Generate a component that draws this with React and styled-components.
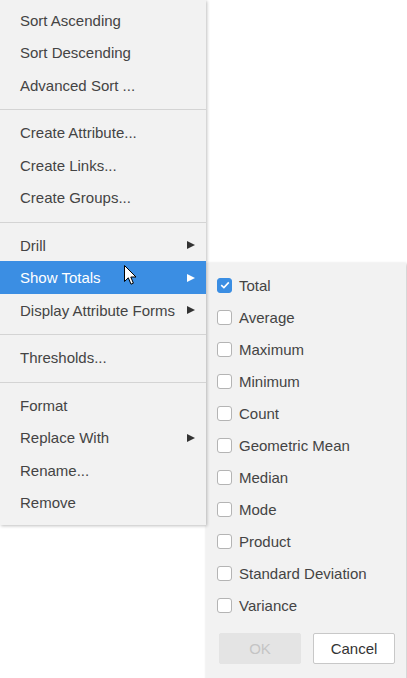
import React from 'react';
import styled, { createGlobalStyle } from 'styled-components';

const mainItems = [
  [
    { label: 'Sort Ascending' },
    { label: 'Sort Descending' },
    { label: 'Advanced Sort ...' },
  ],
  [
    { label: 'Create Attribute...' },
    { label: 'Create Links...' },
    { label: 'Create Groups...' },
  ],
  [
    { label: 'Drill', sub: true },
    { label: 'Show Totals', sub: true, active: true },
    { label: 'Display Attribute Forms', sub: true },
  ],
  [{ label: 'Thresholds...' }],
  [
    { label: 'Format' },
    { label: 'Replace With', sub: true },
    { label: 'Rename...' },
    { label: 'Remove' },
  ],
];

const totals = [
  { label: 'Total', checked: true },
  { label: 'Average' },
  { label: 'Maximum' },
  { label: 'Minimum' },
  { label: 'Count' },
  { label: 'Geometric Mean' },
  { label: 'Median' },
  { label: 'Mode' },
  { label: 'Product' },
  { label: 'Standard Deviation' },
  { label: 'Variance' },
];

export default function App() {
  return (
    <>
      <GlobalStyle />
      <Page>
        <Menu>
          {mainItems.map((group, gi) => (
            <React.Fragment key={gi}>
              {gi > 0 && <Separator />}
              {group.map((item) => (
                <MenuItem key={item.label} $active={item.active}>
                  <span>{item.label}</span>
                  {item.sub && <Arrow $active={item.active} />}
                  {item.active && <Cursor />}
                </MenuItem>
              ))}
            </React.Fragment>
          ))}
        </Menu>
        <TotalsPanel />
      </Page>
    </>
  );
}

function TotalsPanel() {
  return (
    <SubMenu>
      {totals.map((t) => (
        <CheckRow key={t.label}>
          <CheckBox $checked={t.checked}>
            {t.checked && (
              <svg width="10" height="8" viewBox="0 0 10 8">
                <path
                  d="M1.2 4.2 L3.9 6.6 L8.8 1.4"
                  fill="none"
                  stroke="#fff"
                  strokeWidth="1.6"
                />
              </svg>
            )}
          </CheckBox>
          <span>{t.label}</span>
        </CheckRow>
      ))}
      <Actions>
        <Button disabled>OK</Button>
        <Button>Cancel</Button>
      </Actions>
    </SubMenu>
  );
}

function Cursor() {
  return (
    <CursorIcon width="14" height="21" viewBox="0 0 14 21">
      <path
        d="M0.5 0.5 L0.5 16.5 L4.3 12.8 L7 19.2 L9.4 18.2 L6.8 12 L12 12 Z"
        fill="#fff"
        stroke="#000"
        strokeWidth="1"
        strokeLinejoin="round"
      />
    </CursorIcon>
  );
}

const GlobalStyle = createGlobalStyle`
  body {
    margin: 0;
    background: #fff;
    font-family: "Liberation Sans", Arial, sans-serif;
  }
`;

const Page = styled.div`
  display: flex;
  align-items: flex-start;
  height: 678px;
  overflow: hidden;
  font-size: 15px;
  color: #444;
`;

const Menu = styled.div`
  position: relative;
  z-index: 2;
  width: 206px;
  flex-shrink: 0;
  box-sizing: border-box;
  padding: 3.75px 0 6px;
  background: #f2f2f2;
  box-shadow: 1px 1px 3px rgba(0, 0, 0, 0.25);
`;

const Separator = styled.div`
  height: 1px;
  margin: 8px 0 6px;
  background: #d4d4d4;
`;

const MenuItem = styled.div`
  position: relative;
  height: 32.5px;
  display: flex;
  align-items: center;
  justify-content: space-between;
  padding: 0 11px 0 20px;
  background: ${(p) => (p.$active ? '#3b8ee3' : 'transparent')};
  color: ${(p) => (p.$active ? '#fff' : 'inherit')};
  white-space: nowrap;
`;

const Arrow = styled.i`
  width: 0;
  height: 0;
  border-top: 4.5px solid transparent;
  border-bottom: 4.5px solid transparent;
  border-left: 8px solid ${(p) => (p.$active ? '#fff' : '#333')};
`;

const CursorIcon = styled.svg`
  position: absolute;
  left: 124px;
  top: 4px;
`;

const SubMenu = styled.div`
  width: 200px;
  flex-shrink: 0;
  margin-top: 263px;
  box-sizing: border-box;
  padding: 6px 0 20px;
  background: #f2f2f2;
  box-shadow: 1px 1px 3px rgba(0, 0, 0, 0.25);
`;

const CheckRow = styled.div`
  height: 32px;
  display: flex;
  align-items: center;
  gap: 7px;
  padding-left: 11px;
`;

const CheckBox = styled.span`
  width: 15px;
  height: 15px;
  box-sizing: border-box;
  display: flex;
  align-items: center;
  justify-content: center;
  border-radius: 3px;
  border: 1px solid ${(p) => (p.$checked ? '#3b8ee3' : '#b4b4b4')};
  background: ${(p) => (p.$checked ? '#3b8ee3' : '#fff')};
`;

const Actions = styled.div`
  display: flex;
  gap: 12px;
  padding: 12px 0 0 13px;
`;

const Button = styled.button`
  width: 82px;
  height: 31px;
  box-sizing: border-box;
  border-radius: 2px;
  font: 15px "Liberation Sans", Arial, sans-serif;
  border: 1px solid ${(p) => (p.disabled ? '#e4e4e4' : '#c8c8c8')};
  background: ${(p) => (p.disabled ? '#e4e4e4' : '#fff')};
  color: ${(p) => (p.disabled ? '#c4c4c4' : '#333')};
`;
